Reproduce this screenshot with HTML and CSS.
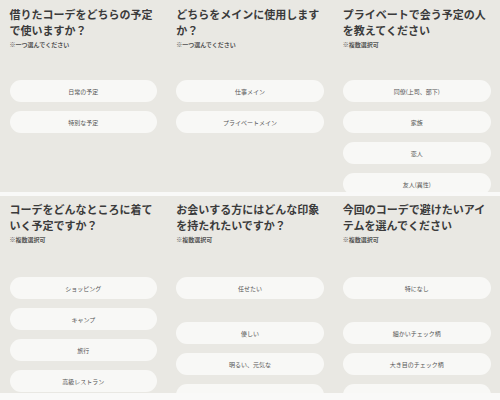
FILE: index.html
```html
<!DOCTYPE html>
<html lang="ja">
<head>
<meta charset="utf-8">
<link rel="stylesheet" href="styles.css">
</head>
<body>
<div class="board">
  <section class="panel top">
    <h2 class="q">借りたコーデをどちらの予定で使いますか？</h2>
    <p class="note">※一つ選んでください</p>
    <div class="opts">
      <div class="opt">日常の予定</div>
      <div class="opt">特別な予定</div>
    </div>
  </section>
  <section class="panel top">
    <h2 class="q">どちらをメインに使用しますか？</h2>
    <p class="note">※一つ選んでください</p>
    <div class="opts">
      <div class="opt">仕事メイン</div>
      <div class="opt">プライベートメイン</div>
    </div>
  </section>
  <section class="panel top">
    <h2 class="q">プライベートで会う予定の人を教えてください</h2>
    <p class="note">※複数選択可</p>
    <div class="opts">
      <div class="opt">同僚(上司、部下)</div>
      <div class="opt">家族</div>
      <div class="opt">恋人</div>
      <div class="opt">友人(異性)</div>
    </div>
  </section>
  <section class="panel bottom">
    <h2 class="q">コーデをどんなところに着ていく予定ですか？</h2>
    <p class="note">※複数選択可</p>
    <div class="opts">
      <div class="opt">ショッピング</div>
      <div class="opt">キャンプ</div>
      <div class="opt">旅行</div>
      <div class="opt">高級レストラン</div>
    </div>
  </section>
  <section class="panel bottom">
    <h2 class="q">お会いする方にはどんな印象を持たれたいですか？</h2>
    <p class="note">※複数選択可</p>
    <div class="opts">
      <div class="opt">任せたい</div>
      <div class="opt spaced">優しい</div>
      <div class="opt">明るい、元気な</div>
      <div class="opt"></div>
    </div>
  </section>
  <section class="panel bottom">
    <h2 class="q">今回のコーデで避けたいアイテムを選んでください</h2>
    <p class="note">※複数選択可</p>
    <div class="opts">
      <div class="opt">特になし</div>
      <div class="opt spaced">細かいチェック柄</div>
      <div class="opt">大き目のチェック柄</div>
      <div class="opt"></div>
    </div>
  </section>
</div>
</body>
</html>
```
FILE: styles.css
```css
html, body {
  margin: 0;
  padding: 0;
}
body {
  width: 500px;
  height: 400px;
  overflow: hidden;
  background: #f9f9f8;
  font-family: "Noto Sans CJK JP", "Noto Sans", sans-serif;
}
.board {
  display: grid;
  grid-template-columns: repeat(3, 1fr);
  grid-template-rows: 192px 197px;
  row-gap: 4px;
}
.panel {
  background: #e9e8e3;
  overflow: hidden;
  padding: 0 9.5px;
  box-sizing: border-box;
}
.panel.top {
  padding-top: 6px;
}
.panel.bottom {
  padding-top: 5px;
}
.q {
  margin: 0;
  font-size: 11px;
  line-height: 16px;
  font-weight: 700;
  color: #3b3b3b;
}
.note {
  margin: 3px 0 0;
  font-size: 6px;
  line-height: 8px;
  font-weight: 700;
  color: #555;
}
.opts {
  display: flex;
  flex-direction: column;
  gap: 9px;
}
.top .opts {
  margin-top: 31px;
}
.bottom .opts {
  margin-top: 33px;
}
.opt {
  height: 22px;
  flex: none;
  border-radius: 11px;
  background: #f8f8f6;
  display: flex;
  align-items: center;
  justify-content: center;
  font-size: 6px;
  color: #555;
}
.opt.spaced {
  margin-top: 14px;
}
```
